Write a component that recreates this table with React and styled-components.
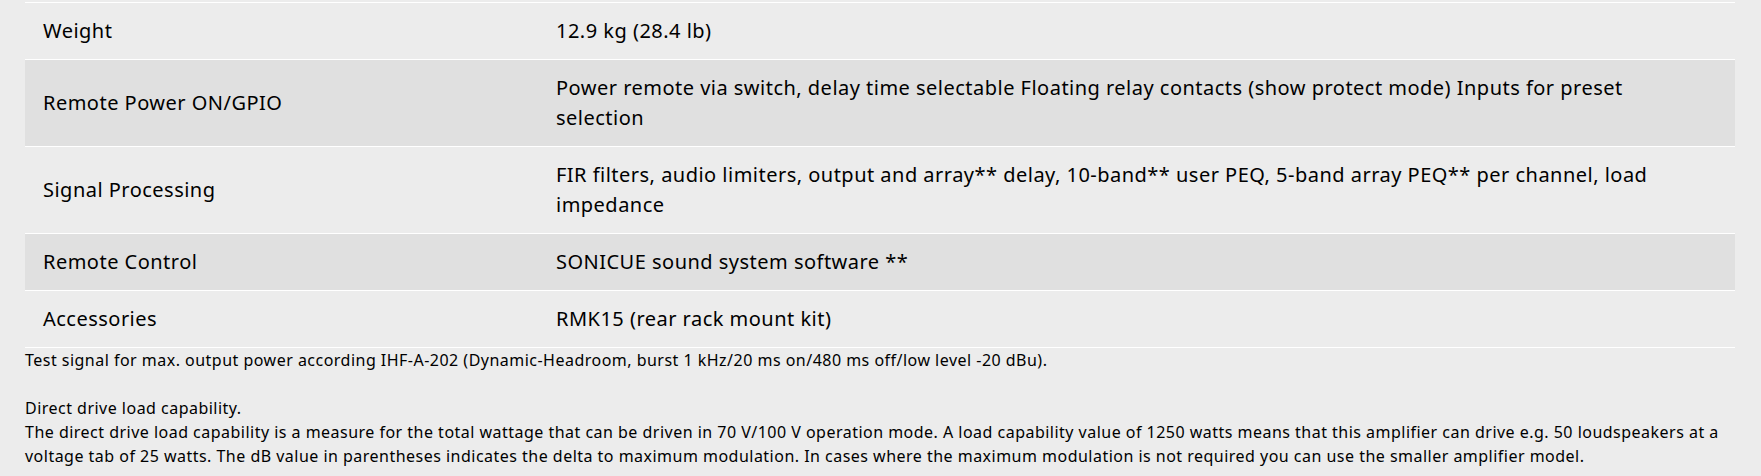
import React from "react";
import styled, { createGlobalStyle } from "styled-components";

const GlobalStyle = createGlobalStyle`
  html, body {
    margin: 0;
    padding: 0;
    background: #ececec;
  }
  body {
    font-family: "Noto Sans", "Open Sans", sans-serif;
    color: #000;
    letter-spacing: 0.03em;
  }
`;

const Page = styled.div`
  padding: 2px 26px 0 25px;
`;

const SpecTable = styled.table`
  width: 100%;
  border-collapse: collapse;
  table-layout: fixed;
  font-size: 20px;
  line-height: 30px;
`;

const Row = styled.tr`
  background: ${(props) => (props.$shaded ? "#e0e0e0" : "#ececec")};
  border-top: 1px solid #fff;
  border-bottom: 1px solid #fff;
`;

const Label = styled.td`
  box-sizing: border-box;
  width: 30%;
  padding: 13px 18px;
  vertical-align: middle;
`;

const Value = styled.td`
  padding: 13px 32px 13px 18px;
  vertical-align: middle;
`;

const Notes = styled.div`
  font-size: 16px;
  line-height: 24px;
`;

const specs = [
  ["Weight", "12.9 kg (28.4 lb)"],
  [
    "Remote Power ON/GPIO",
    "Power remote via switch, delay time selectable Floating relay contacts (show protect mode) Inputs for preset selection",
  ],
  [
    "Signal Processing",
    "FIR filters, audio limiters, output and array** delay, 10-band** user PEQ, 5-band array PEQ** per channel, load impedance",
  ],
  ["Remote Control", "SONICUE sound system software **"],
  ["Accessories", "RMK15 (rear rack mount kit)"],
];

const App = () => {
  return (
    <Page>
      <GlobalStyle />
      <SpecTable>
        <tbody>
          {specs.map(([label, value], i) => (
            <Row key={label} $shaded={i % 2 === 1}>
              <Label>{label}</Label>
              <Value>{value}</Value>
            </Row>
          ))}
        </tbody>
      </SpecTable>
      <Notes>
        Test signal for max. output power according IHF-A-202 (Dynamic-Headroom,
        burst 1 kHz/20 ms on/480 ms off/low level -20 dBu).
        <br />
        <br />
        Direct drive load capability.
        <br />
        The direct drive load capability is a measure for the total wattage that
        can be driven in 70 V/100 V operation mode. A load capability value of
        1250 watts means that this amplifier can drive e.g. 50 loudspeakers at a
        voltage tab of 25 watts. The dB value in parentheses indicates the delta
        to maximum modulation. In cases where the maximum modulation is not
        required you can use the smaller amplifier model.
      </Notes>
    </Page>
  );
};

export default App;
